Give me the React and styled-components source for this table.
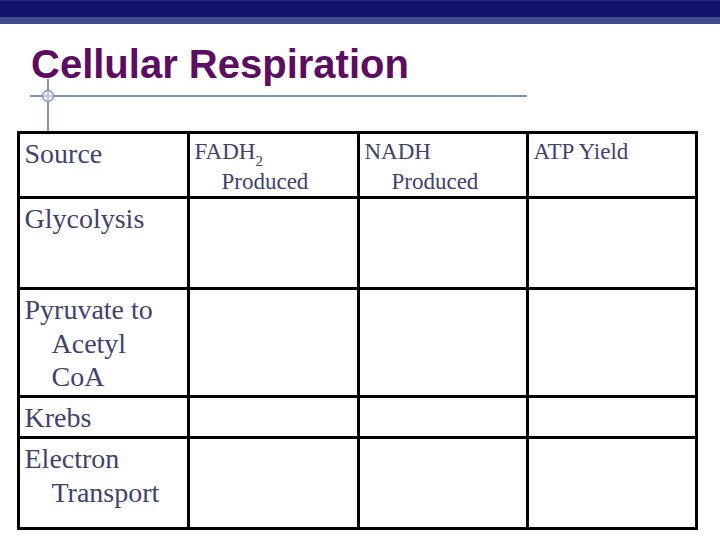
import React from "react";
import styled, { createGlobalStyle } from "styled-components";

const Global = createGlobalStyle`
  html, body { margin: 0; padding: 0; background: #ffffff; }
  body { width: 720px; height: 540px; overflow: hidden; }
`;

const Slide = styled.div`
  width: 720px;
  height: 540px;
  display: flex;
  flex-direction: column;
  background: #ffffff;
`;

const TopBar = styled.div`
  height: 17px;
  background: #12126b;
  border-top: 1px solid #2a2a7a;
  box-sizing: border-box;
`;

const TopBand = styled.div`
  height: 7px;
  background: #434c8d;
`;

const Title = styled.h1`
  margin: 20px 0 0 0;
  padding-left: 31px;
  height: 40px;
  font-family: "Liberation Sans", Arial, sans-serif;
  font-weight: bold;
  font-size: 40px;
  line-height: 40px;
  color: #5e0b62;
`;

const Rule = styled.svg`
  display: block;
  margin-top: -5px;
  width: 540px;
  height: 52px;
`;

const Grid = styled.div`
  margin-left: 16.5px;
  width: 681px;
  box-sizing: border-box;
  display: grid;
  grid-template-columns: 167px 167px 166px 166px;
  grid-template-rows: 62px 88px 105px 38px 88px;
  gap: 3px;
  padding: 3px;
  background: #000000;
`;

const Cell = styled.div`
  background: #ffffff;
  padding: 3px 4px 0 32px;
  text-indent: -27px;
  font-family: "Liberation Serif", "Times New Roman", serif;
  color: #40426f;
  font-size: ${(p) => (p.$small ? 23 : 28)}px;
  line-height: ${(p) => (p.$small ? 29.5 : 33.6)}px;
  white-space: nowrap;
  overflow: hidden;
`;

const Sub = styled.sub`
  font-size: 15px;
  line-height: 0;
  vertical-align: -7px;
`;

const rows = [
  ["Glycolysis"],
  ["Pyruvate to", "Acetyl", "CoA"],
  ["Krebs"],
  ["Electron", "Transport"],
];

function Lines({ lines }) {
  return lines.map((l, i) => (
    <React.Fragment key={i}>
      {i > 0 && <br />}
      {l}
    </React.Fragment>
  ));
}

export default function App() {
  return (
    <>
      <Global />
      <Slide>
        <TopBar />
        <TopBand />
        <Title>Cellular Respiration</Title>
        <Rule viewBox="0 0 540 52">
          <line x1="30" y1="17" x2="527" y2="17" stroke="#7e95bf" strokeWidth="2" />
          <line x1="48" y1="0" x2="48" y2="52" stroke="#7e95bf" strokeWidth="2" />
          <circle cx="48" cy="17" r="5.5" fill="#e6ecf5" fillOpacity="0.6" stroke="#7e95bf" strokeWidth="1.3" />
        </Rule>
        <Grid>
          <Cell>Source</Cell>
          <Cell $small>
            FADH<Sub>2</Sub>
            <br />
            Produced
          </Cell>
          <Cell $small>
            NADH
            <br />
            Produced
          </Cell>
          <Cell $small>ATP Yield</Cell>
          {rows.map((r, i) => (
            <React.Fragment key={i}>
              <Cell>
                <Lines lines={r} />
              </Cell>
              <Cell />
              <Cell />
              <Cell />
            </React.Fragment>
          ))}
        </Grid>
      </Slide>
    </>
  );
}
